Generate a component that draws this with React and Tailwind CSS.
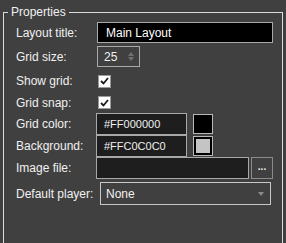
import { useState } from "react";

function Row({ label, children, className = "" }) {
  return (
    <div className={`flex items-center ${className}`}>
      <span className="w-[81px] shrink-0 whitespace-nowrap">{label}</span>
      {children}
    </div>
  );
}

function Check({ on }) {
  return (
    <span className="ml-[1px] flex h-[13px] w-[13px] items-center justify-center border border-[#9a9a9a] bg-white">
      {on && (
        <svg width="9" height="8" viewBox="0 0 9 8">
          <path d="M1 4 L3.5 6.5 L8 1" fill="none" stroke="#1a1a1a" strokeWidth="1.8" />
        </svg>
      )}
    </span>
  );
}

export default function App() {
  const [title, setTitle] = useState("Main Layout");

  return (
    <div
      className="h-[243px] w-[286px] overflow-hidden bg-[#404040] pl-[3px] pr-[3px] pt-[4px] text-[12px] text-[#f0f0f0]"
      style={{ fontFamily: '"Liberation Sans", Arial, sans-serif' }}
    >
      <fieldset className="h-[260px] border border-[#dcdcdc] pl-[12px] pr-[9px]">
        <legend className="-ml-[8px] px-[3px] text-[12px] leading-[16px]">Properties</legend>

        {/* Layout title */}
        <Row label="Layout title:" className="mt-[2px] h-[21px]">
          <input
            value={title}
            onChange={e => setTitle(e.target.value)}
            className="h-[21px] w-[176px] border border-[#a8a8a8] bg-black px-[8px] text-[12px] text-white outline-none"
          />
        </Row>

        {/* Grid size */}
        <Row label="Grid size:" className="mt-[3px] h-[21px]">
          <div className="flex h-[21px] w-[43px] items-center justify-between border border-[#a8a8a8] pl-[6px] pr-[5px] text-[12px]">
            <span>25</span>
            <div className="flex flex-col items-center gap-[1px]">
              <span className="h-0 w-0 border-x-[3.5px] border-b-[4px] border-x-transparent border-b-[#707070]" />
              <span className="h-0 w-0 border-x-[3.5px] border-t-[4px] border-x-transparent border-t-[#707070]" />
            </div>
          </div>
        </Row>

        <Row label="Show grid:" className="mt-[3px] h-[22px]">
          <Check on />
        </Row>
        <Row label="Grid snap:" className="h-[21px]">
          <Check on />
        </Row>

        {/* Colors */}
        <Row label="Grid color:" className="h-[22px]">
          <div className="-ml-[1px] flex h-[22px] w-[91px] items-center border border-[#a8a8a8] bg-[#1e1e1e] px-[7px] text-[11px]">
            #FF000000
          </div>
          <span className="ml-[6px] h-[20px] w-[20px] border border-[#b8b8b8] bg-black" />
        </Row>
        <Row label="Background:" className="h-[22px]">
          <div className="-ml-[1px] flex h-[22px] w-[91px] items-center border border-[#a8a8a8] bg-[#1e1e1e] px-[7px] text-[11px]">
            #FFC0C0C0
          </div>
          <span className="ml-[6px] h-[20px] w-[20px] border border-[#b8b8b8] bg-black p-[2px]">
            <span className="block h-full w-full bg-[#c4c4c4]" />
          </span>
        </Row>

        {/* Image file */}
        <Row label="Image file:" className="h-[22px]">
          <div className="-ml-[1px] h-[22px] w-[153px] border border-[#a8a8a8] bg-[#1e1e1e]" />
          <div className="ml-[2px] flex h-[22px] w-[22px] items-center justify-center border border-[#8a8a8a] pb-[3px] text-[10px] font-bold leading-none">
            ...
          </div>
        </Row>

        {/* Default player */}
        <Row label="Default player:" className="mt-[3px] h-[23px]">
          <div className="ml-[3px] flex h-[23px] w-[171px] items-center justify-between border border-[#c8c8c8] pl-[5px] pr-[6px] text-[12px]">
            <span>None</span>
            <span className="h-0 w-0 border-x-[3.5px] border-t-[4px] border-x-transparent border-t-[#8a8a8a]" />
          </div>
        </Row>
      </fieldset>
    </div>
  );
}
